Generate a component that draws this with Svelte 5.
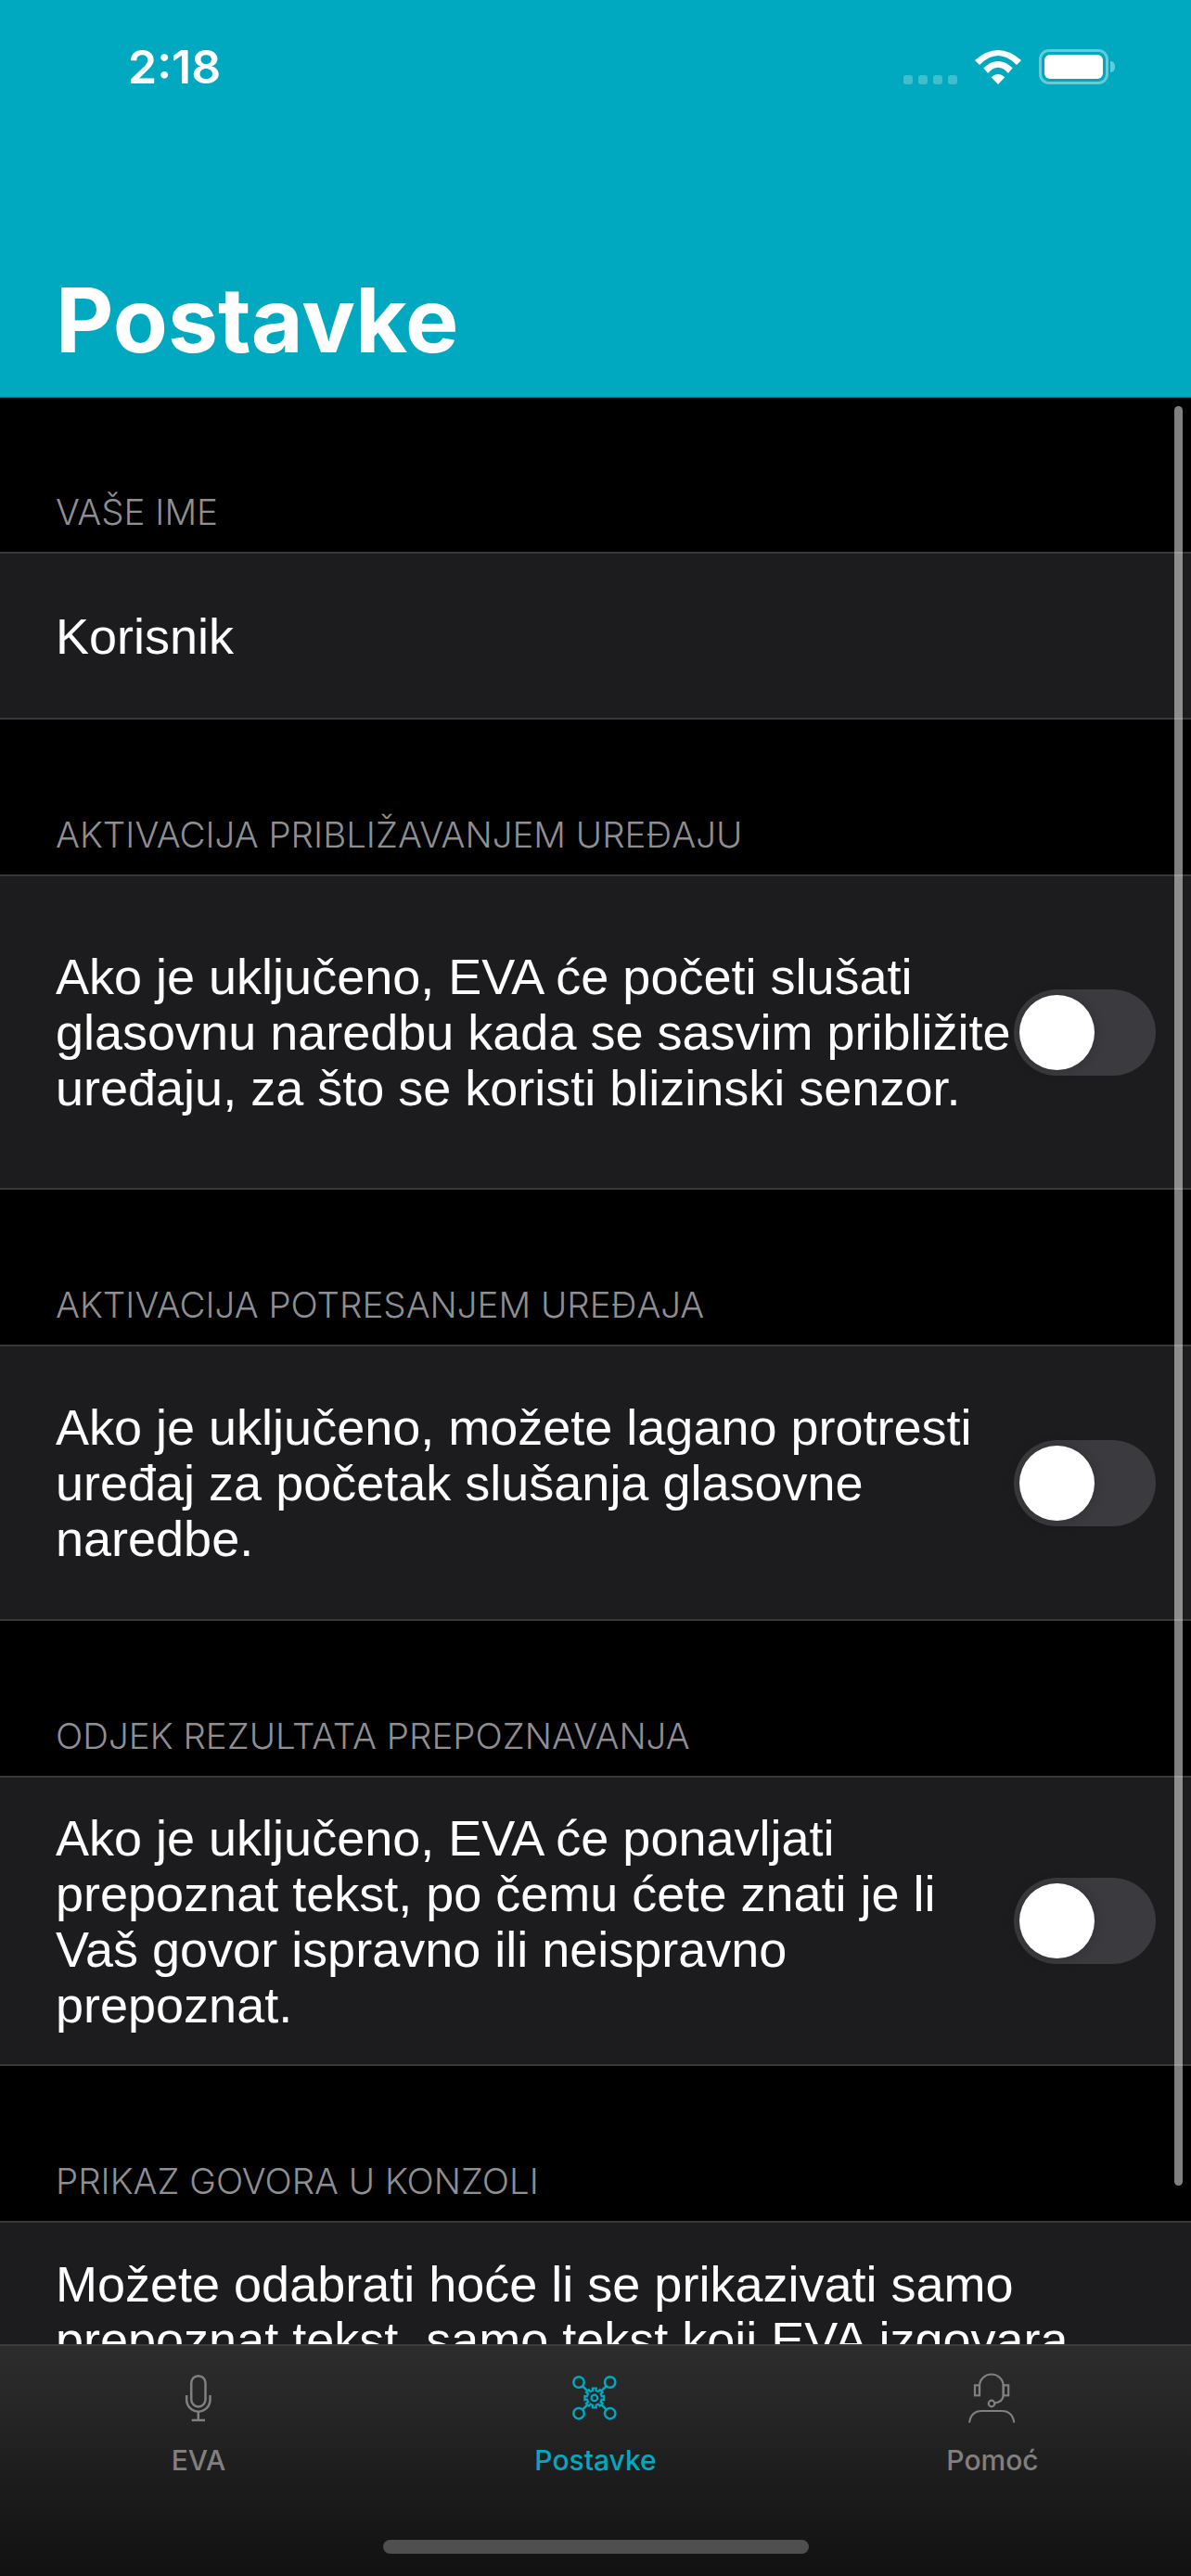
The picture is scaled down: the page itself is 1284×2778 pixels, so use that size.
<script>
  const sections = [
    { title: 'VAŠE IME', name: 'Korisnik' },
    {
      title: 'AKTIVACIJA PRIBLIŽAVANJEM UREĐAJU',
      lines: ['Ako je uključeno, EVA će početi slušati', 'glasovnu naredbu kada se sasvim približite', 'uređaju, za što se koristi blizinski senzor.'],
      toggle: true,
      cls: 'prox'
    },
    {
      title: 'AKTIVACIJA POTRESANJEM UREĐAJA',
      lines: ['Ako je uključeno, možete lagano protresti', 'uređaj za početak slušanja glasovne', 'naredbe.'],
      toggle: true,
      cls: 'shake'
    },
    {
      title: 'ODJEK REZULTATA PREPOZNAVANJA',
      lines: ['Ako je uključeno, EVA će ponavljati', 'prepoznat tekst, po čemu ćete znati je li', 'Vaš govor ispravno ili neispravno', 'prepoznat.'],
      toggle: true,
      cls: 'echo'
    },
    {
      title: 'PRIKAZ GOVORA U KONZOLI',
      lines: ['Možete odabrati hoće li se prikazivati samo', 'prepoznat tekst, samo tekst koji EVA izgovara'],
      cls: 'last'
    }
  ];

  // square-toothed gear outline, 8 teeth
  function gearPath(cx, cy, outer, inner) {
    const pts = [];
    for (let i = 0; i < 8; i++) {
      const a = (i * Math.PI) / 4;
      const w = 0.22;
      [[inner, a - 0.39 + 0.08], [inner, a - w], [outer, a - w + 0.03], [outer, a + w - 0.03], [inner, a + w]].forEach(([r, t]) => {
        pts.push((cx + r * Math.cos(t)).toFixed(1) + ' ' + (cy + r * Math.sin(t)).toFixed(1));
      });
    }
    return 'M' + pts.join(' L') + ' Z';
  }
</script>

<div class="phone">
  <header class="header">
    <div class="status">
      <span class="time">2:18</span>
      <div class="status-icons">
        <div class="dots"><i></i><i></i><i></i><i></i></div>
        <svg class="wifi" width="50" height="37" viewBox="0 0 150 111" fill="#fff">
          <path d="M0 33 Q75 -33 150 33 L135 48 Q75 -12 15 48 Z"/>
          <path d="M28 58 Q75 14 122 58 L108 75 Q75 37 42 75 Z"/>
          <path d="M53 88 Q75 68 97 88 L75 111 Z"/>
        </svg>
        <div class="battery"><div class="battery-fill"></div></div>
        <div class="battery-cap"></div>
      </div>
    </div>
    <h1>Postavke</h1>
  </header>

  <main class="list">
    {#each sections as s}
      <div class="section-title">{s.title}</div>
      <div class="cell {s.cls ?? ''}">
        {#if s.name}
          <span class="name">{s.name}</span>
        {:else}
          <p>{#each s.lines as l}<span>{l}</span>{/each}</p>
          {#if s.toggle}
            <div class="switch"><div class="knob"></div></div>
          {/if}
        {/if}
      </div>
    {/each}
  </main>

  <div class="scrollbar"></div>

  <nav class="tabs">
    <div class="tab-row">
      <div class="tab">
        <svg width="60" height="56" viewBox="0 0 60 56" fill="none" stroke="#808080" stroke-width="2.500">
          <rect x="22.200" y="4.200" width="15.300" height="33.200" rx="7.600"/>
          <path d="M17.200 25 V30 A12.650 12.650 0 0 0 42.500 30 V25"/>
          <path d="M29.800 43 V52 M22.700 52 H37"/>
        </svg>
        <span>EVA</span>
      </div>
      <div class="tab active">
        <svg width="60" height="56" viewBox="0 0 60 56" fill="none" stroke="#00a9bf" stroke-width="2.500">
          <circle cx="12" cy="11" r="5.700"/>
          <circle cx="45.700" cy="11" r="5.700"/>
          <circle cx="12" cy="44.700" r="5.700"/>
          <circle cx="45.700" cy="44.700" r="5.700"/>
          <path d="M16.300 15.300 L21.300 20.300 M41.400 15.300 L36.400 20.300 M16.300 40.400 L21.300 35.400 M41.400 40.400 L36.400 35.400"/>
          <path d={gearPath(28.8, 27.9, 10.6, 8)} stroke-width="2.200"/>
          <circle cx="28.800" cy="27.900" r="3.300" stroke-width="2.200"/>
        </svg>
        <span>Postavke</span>
      </div>
      <div class="tab">
        <svg width="60" height="56" viewBox="0 0 60 56" fill="none" stroke="#808080" stroke-width="2.200">
          <path d="M16 23 V15 A12.850 12.500 0 0 1 41.700 15 V25.300 Q41 32 32.700 33.500"/>
          <rect x="11" y="14.300" width="5" height="11"/>
          <rect x="41.700" y="14.300" width="5.500" height="11"/>
          <circle cx="29" cy="34" r="3.300"/>
          <path d="M5 54.700 Q7 42 18.300 42 H40 Q51.500 42 53.300 54.700"/>
        </svg>
        <span>Pomoć</span>
      </div>
    </div>
    <div class="home"></div>
  </nav>
</div>

<style>
  :global(body) {
    margin: 0;
    background: #000;
  }
  .phone {
    position: relative;
    width: 1284px;
    height: 2778px;
    overflow: hidden;
    background: #000;
    display: flex;
    flex-direction: column;
    font-family: Inter, "Liberation Sans", sans-serif;
  }
  .header {
    height: 429px;
    flex: none;
    box-sizing: border-box;
    background: #00a9bf;
    border-bottom: 1px solid #0b6f7d;
    padding: 0 0 25px 60px;
    display: flex;
    flex-direction: column;
    justify-content: space-between;
    color: #fff;
  }
  .status {
    display: flex;
    justify-content: space-between;
    align-items: flex-start;
  }
  .time {
    font-size: 50px;
    font-weight: 600;
    margin: 43px 0 0 78px;
    line-height: 58px;
  }
  .status-icons {
    display: flex;
    align-items: center;
    margin: 53px 82px 0 0;
    height: 38px;
  }
  .dots {
    display: flex;
    gap: 6px;
    margin-right: 19px;
    align-self: flex-end;
  }
  .dots i {
    width: 10px;
    height: 10px;
    border-radius: 3px;
    background: rgba(255, 255, 255, 0.25);
  }
  .wifi {
    margin-right: 19px;
  }
  .battery {
    width: 75px;
    height: 38px;
    box-sizing: border-box;
    border: 3px solid rgba(255, 255, 255, 0.4);
    border-radius: 11px;
    padding: 3px;
  }
  .battery-fill {
    height: 100%;
    background: #fff;
    border-radius: 6px;
  }
  .battery-cap {
    width: 5px;
    height: 12px;
    margin-left: 2px;
    background: rgba(255, 255, 255, 0.4);
    border-radius: 0 6px 6px 0;
  }
  h1 {
    margin: 0;
    font-size: 96.500px;
    font-weight: 700;
    line-height: 116px;
  }
  .list {
    flex: 1;
    min-height: 0;
    overflow: hidden;
  }
  .section-title {
    height: 167px;
    box-sizing: border-box;
    padding: 0 60px 20px;
    display: flex;
    align-items: flex-end;
    font-size: 38.500px;
    font-weight: 300;
    line-height: 46px;
    color: #8e8e93;
  }
  .section-title:first-child {
    height: 166px;
  }
  .cell {
    box-sizing: border-box;
    background: #1c1c1e;
    border-top: 2px solid #38383a;
    border-bottom: 2px solid #38383a;
    padding: 0 38px 0 60px;
    display: flex;
    align-items: center;
    color: #fff;
    height: 181px;
  }
  .cell.prox {
    height: 340px;
  }
  .cell.shake {
    height: 298px;
  }
  .cell.echo {
    height: 313px;
  }
  .cell.last {
    height: 300px;
    align-items: flex-start;
    padding-top: 36px;
  }
  .name,
  p {
    font-family: "Liberation Sans", Arial, sans-serif;
    font-size: 54px;
  }
  p {
    flex: 1;
    min-width: 0;
    margin: 0;
    line-height: 60px;
    white-space: nowrap;
  }
  p span {
    display: block;
  }
  .switch {
    flex: none;
    width: 153px;
    height: 93px;
    box-sizing: border-box;
    padding: 6px;
    border-radius: 47px;
    background: #3a3a3f;
  }
  .knob {
    width: 81px;
    height: 81px;
    border-radius: 50%;
    background: #fff;
    box-shadow: 0 0 14px rgba(0, 0, 0, 0.18);
  }
  .scrollbar {
    position: absolute;
    right: 9px;
    top: 438px;
    width: 9px;
    height: 1919px;
    border-radius: 5px;
    background: rgba(255, 255, 255, 0.5);
  }
  .tabs {
    flex: none;
    height: 250px;
    box-sizing: border-box;
    border-top: 2px solid #3d3d3d;
    background: linear-gradient(#2d2d2d, #111);
    display: flex;
    flex-direction: column;
    align-items: center;
    padding-top: 28px;
  }
  .tab-row {
    width: 100%;
    display: grid;
    grid-template-columns: repeat(3, 428px);
  }
  .tab {
    display: flex;
    flex-direction: column;
    align-items: center;
    color: #808080;
    font-size: 30px;
    font-weight: 500;
  }
  .tab span {
    line-height: 36px;
    margin-top: 21px;
  }
  .tab.active {
    color: #00a9bf;
  }
  .home {
    width: 459px;
    height: 15px;
    margin-top: 68px;
    border-radius: 8px;
    background: #4f4f4f;
  }
</style>
